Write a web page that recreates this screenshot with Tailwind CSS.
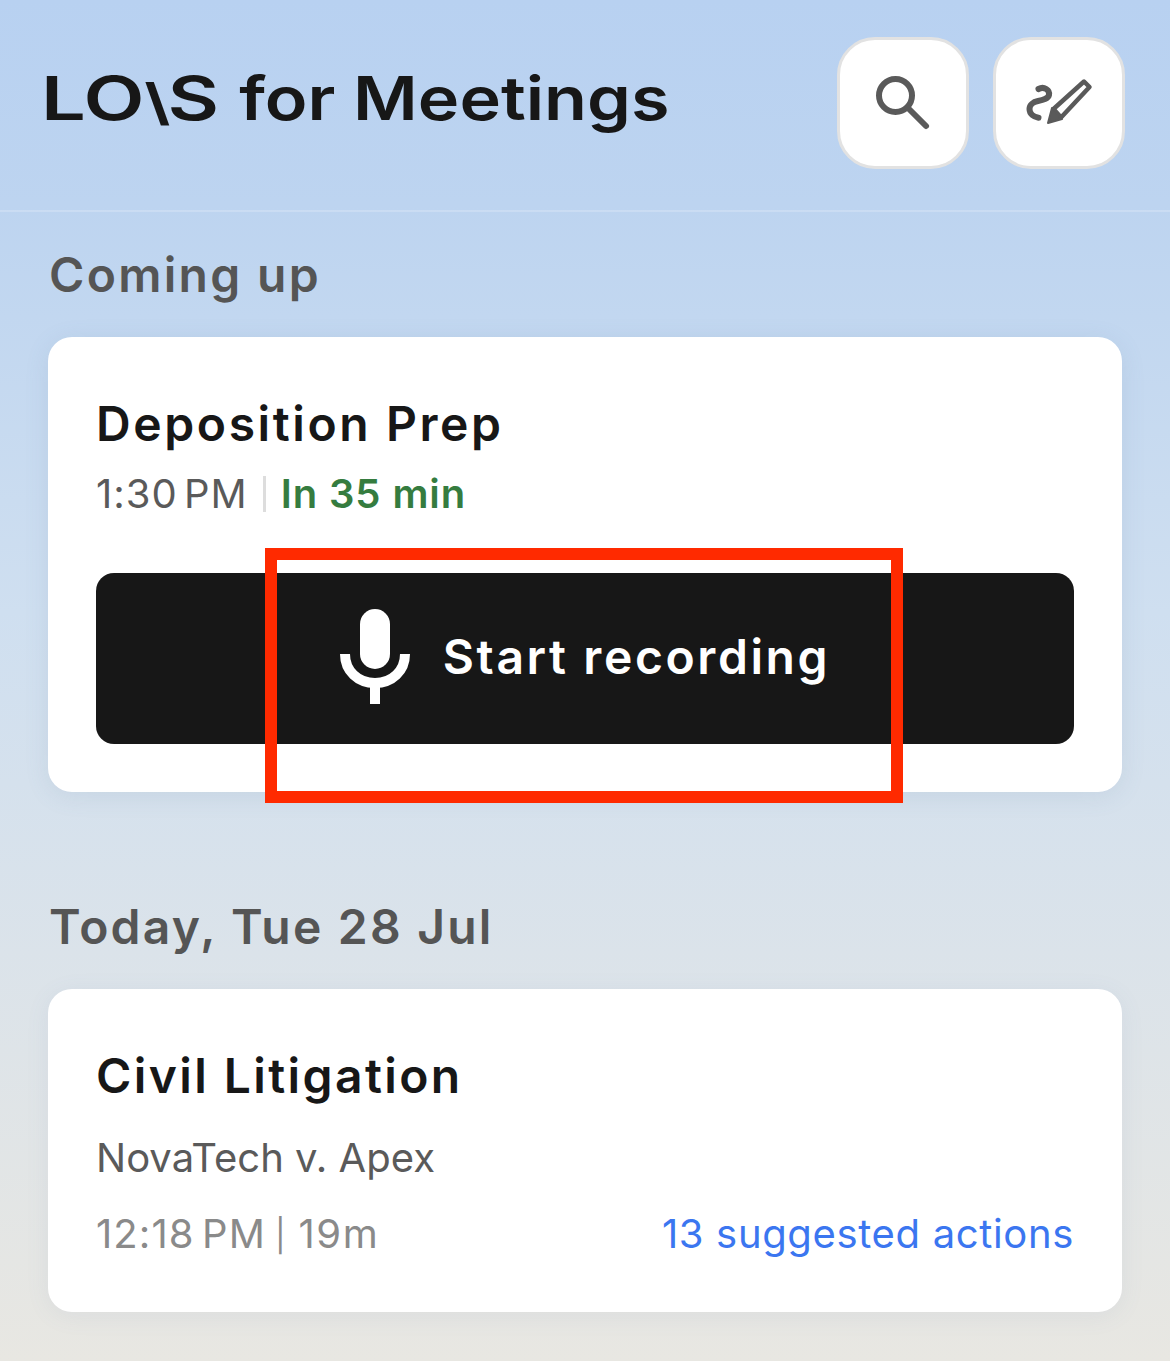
<!doctype html>
<html>
<head>
<meta charset="utf-8">
<script src="https://cdn.jsdelivr.net/npm/@tailwindcss/browser@4"></script>
</head>
<body class="m-0">
<div class="relative w-[1170px] h-[1361px] overflow-hidden font-['Inter',sans-serif] bg-[linear-gradient(180deg,#b8d1f1_0%,#bdd4f0_15%,#cfdff0_45%,#dbe3ea_70%,#e8e7e2_100%)]">
  <header class="h-[212px] border-b-2 border-white/20 flex items-start justify-between pl-[41px] pr-[45px] pt-[37px]">
    <div class="mt-[22px] h-[78px] text-[60px] leading-[78px] font-semibold text-[#171717] whitespace-nowrap origin-left scale-x-[1.17]"><span class="inline-block origin-left scale-x-[1.13] mr-[19.5px]">LO<span class="font-bold text-[50px] tracking-[-2px]">\</span>S</span> for Meetings</div>
    <div class="flex gap-[24px]">
      <button class="w-[132px] h-[132px] rounded-[38px] bg-white border-[3px] border-[#e2e2e2] flex items-center justify-center">
        <svg width="60" height="60" viewBox="0 0 60 60" fill="none" stroke="#5a5a5a" stroke-width="6" stroke-linecap="round"><circle cx="22.5" cy="22.5" r="16.5"/><path d="M35 35 L53 53"/></svg>
      </button>
      <button class="w-[132px] h-[132px] rounded-[38px] bg-white border-[3px] border-[#e2e2e2] flex items-center justify-center">
        <svg width="70" height="50" viewBox="0 0 70 50" fill="none" stroke="#5a5a5a" stroke-width="6" stroke-linecap="round" stroke-linejoin="round"><path d="M14.5 11 C20 8 26 12 25 17 C24 21 19 22 14 23 C9 24 5.5 27 5.5 31 C5.5 36 10 39 14.5 39.7"/><path d="M29.5 31 L60 3.5 L65.5 9 L37 39.5 Z" stroke-width="4.5"/><path d="M24 45 L28 30 L38 41 Z" fill="#5a5a5a" stroke-width="2"/></svg>
      </button>
    </div>
  </header>

  <main class="px-[48px]">
    <h2 class="mt-[34px] pl-[1px] text-[48px] leading-[58px] font-semibold text-[#555555] tracking-[2.3px]">Coming up</h2>
    <section class="mt-[33px] h-[455px] rounded-[24px] bg-white shadow-[0_4px_24px_rgba(90,120,160,0.12)] px-[48px] pt-[58px]">
      <h3 class="text-[48px] leading-[58px] font-semibold text-[#171717] tracking-[2.6px] whitespace-nowrap">Deposition Prep</h3>
      <div class="mt-[21px] flex items-center h-[40px] text-[40px] leading-[40px]">
        <span class="text-[#5a5a5a] tracking-[1px] [word-spacing:-6px]">1:30 PM</span>
        <span class="ml-[15px] mr-[15px] w-[3px] h-[36px] bg-[#dddddd]"></span>
        <span class="font-semibold text-[#357c3f] tracking-[0.9px]">In 35 min</span>
      </div>
      <button class="mt-[59px] w-[978px] h-[171px] rounded-[18px] bg-[#171717] flex items-center justify-center gap-[33px] pb-[4px]">
        <svg width="70" height="96" viewBox="0 0 70 96" fill="none"><rect x="20" y="0" width="30" height="60" rx="15" fill="#fff"/><path d="M5 45 C5 62 18 74 35 74 C52 74 65 62 65 45" stroke="#fff" stroke-width="10"/><path d="M35 74 V95" stroke="#fff" stroke-width="10"/></svg>
        <span class="text-[48px] leading-[58px] font-semibold text-white tracking-[2.6px]">Start recording</span>
      </button>
    </section>

    <h2 class="mt-[106px] pl-[1px] text-[48px] leading-[58px] font-semibold text-[#555555] tracking-[2.2px]">Today, Tue 28 Jul</h2>
    <section class="mt-[33px] h-[323px] rounded-[24px] bg-white shadow-[0_4px_24px_rgba(90,120,160,0.08)] px-[48px] pt-[58px]">
      <h3 class="text-[48px] leading-[58px] font-semibold text-[#171717] tracking-[2.4px] whitespace-nowrap">Civil Litigation</h3>
      <p class="mt-[29px] text-[40px] leading-[48px] text-[#5a5a5a]">NovaTech v. Apex</p>
      <div class="mt-[28px] flex justify-between text-[40px] leading-[48px]">
        <span class="flex items-center text-[#8a8a8a]">
          <span class="tracking-[1.1px] [word-spacing:-5px]">12:18 PM</span>
          <span class="ml-[9px] mr-[13px] text-[32px] translate-y-[2px]">|</span>
          <span class="tracking-[1.5px]">19m</span>
        </span>
        <span class="text-[#3b76f0] tracking-[0.65px]">13 suggested actions</span>
      </div>
    </section>
  </main>

  <div class="absolute left-[265px] top-[548px] w-[638px] h-[255px] border-[12px] border-[#ff2a00]"></div>
</div>
</body>
</html>
